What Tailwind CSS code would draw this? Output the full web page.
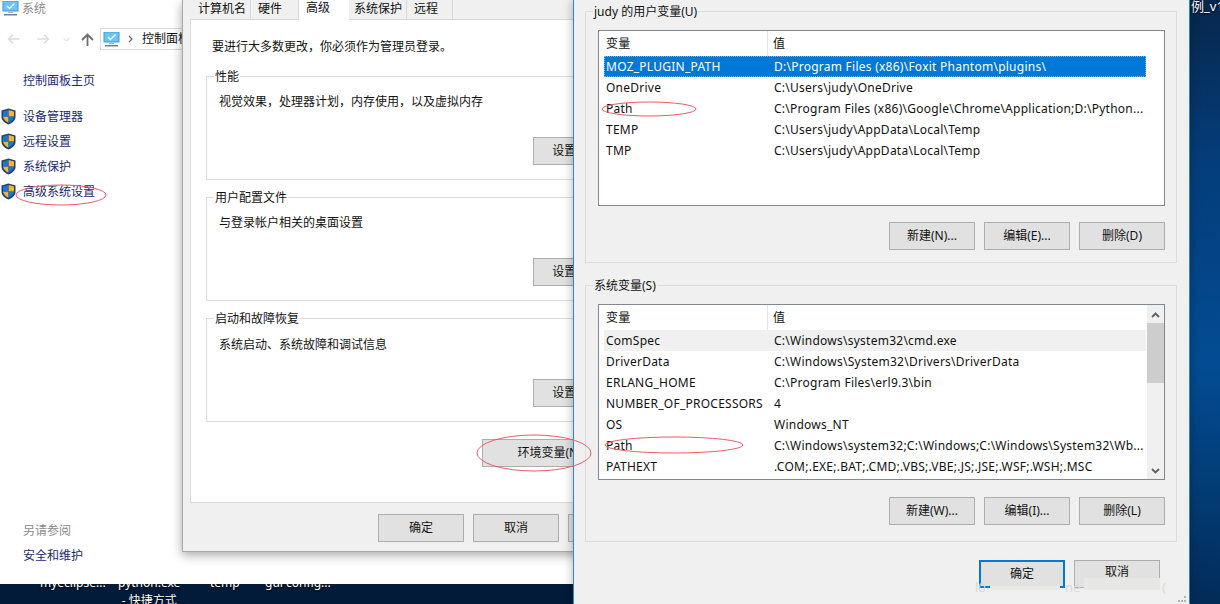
<!DOCTYPE html>
<html lang="zh-CN">
<head>
  <meta charset="UTF-8" />
  <title>系统属性 - 环境变量</title>
  <script src="https://cdn.jsdelivr.net/npm/@tailwindcss/browser@4"></script>
</head>
<body class="bg-[#021b38] font-['Noto_Sans','Noto_Sans_CJK_SC',sans-serif] text-[12px] leading-[18px] text-[#111]">
<div class="relative w-[1220px] h-[604px] overflow-hidden">

  <!-- desktop -->
  <div class="absolute right-0 top-0 w-[31px] h-[604px] bg-[linear-gradient(180deg,#06274c_0%,#043c78_25%,#034c94_60%,#02396f_85%,#022b58_100%)]"></div>
  <div class="absolute left-[1191px] top-[-3px] text-white text-[13px] whitespace-nowrap [text-shadow:0_1px_2px_#000]">例_v1.</div>
  <div class="absolute left-[40px] top-[574px] text-white whitespace-nowrap [text-shadow:0_1px_2px_#000]">myeclipse...</div>
  <div class="absolute left-[118px] top-[574px] text-white whitespace-nowrap text-center [text-shadow:0_1px_2px_#000]">python.exe<br />- 快捷方式</div>
  <div class="absolute left-[210px] top-[574px] text-white whitespace-nowrap [text-shadow:0_1px_2px_#000]">temp</div>
  <div class="absolute left-[265px] top-[574px] text-white whitespace-nowrap [text-shadow:0_1px_2px_#000]">gui config...</div>

  <!-- control panel window -->
  <div class="absolute left-0 top-0 w-[590px] h-[584px] bg-white flex flex-col">
    <div class="flex items-center h-[17px] pl-[2px] gap-[3px] text-[#8a8a8a]">
      <svg width="17" height="15" viewBox="0 0 17 15"><rect x="1" y="0" width="15" height="10" fill="#6cc4f5" stroke="#3e97d8" /><path d="M5 5l2.500 2.500 5-5" fill="none" stroke="#fff" stroke-width="1.500" /><rect x="6" y="11" width="5" height="1" fill="#9db4c8" /><rect x="2" y="13" width="13" height="1.500" fill="#6d8296" /></svg>
      <span>系统</span>
    </div>
    <div class="flex items-center h-[22px] mt-[11px]">
      <svg class="ml-[7px]" width="13" height="12" viewBox="0 0 13 12"><path d="M12.500 6H1.500M6 1.500L1.500 6 6 10.500" fill="none" stroke="#dcdcdc" stroke-width="1.500" /></svg>
      <svg class="ml-[17px]" width="13" height="12" viewBox="0 0 13 12"><path d="M.5 6h11M7 1.500L11.500 6 7 10.500" fill="none" stroke="#dcdcdc" stroke-width="1.500" /></svg>
      <svg class="ml-[13px]" width="7" height="5" viewBox="0 0 7 5"><path d="M.5 1l3 3 3-3" fill="none" stroke="#d4d4d4" /></svg>
      <svg class="ml-[11px]" width="13" height="13" viewBox="0 0 13 13"><path d="M6.500 13V1.500M1 7l5.500-5.500L12 7" fill="none" stroke="#6e6e6e" stroke-width="1.800" /></svg>
      <div class="ml-[6px] w-[200px] h-[22px] border border-[#d9d9d9] flex items-center pl-[2px] whitespace-nowrap overflow-hidden">
        <svg class="shrink-0" width="17" height="15" viewBox="0 0 17 15"><rect x="1" y="0" width="15" height="10" fill="#6cc4f5" stroke="#3e97d8" /><path d="M5 5l2.500 2.500 5-5" fill="none" stroke="#fff" stroke-width="1.500" /><rect x="6" y="11" width="5" height="1" fill="#9db4c8" /><rect x="2" y="13" width="13" height="1.500" fill="#6d8296" /></svg>
        <svg class="ml-[8px] shrink-0" width="5" height="8" viewBox="0 0 5 8"><path d="M1 1l3 3-3 3" fill="none" stroke="#666" stroke-width="1.200" /></svg>
        <span class="ml-[9px]">控制面板</span>
      </div>
    </div>
    <div class="pl-[23px] mt-[22px] text-[#1a2a6c]">控制面板主页</div>
    <ul class="mt-[14px] text-[#1a2a6c]">
      <li class="flex items-center h-[25px] pl-[1px] gap-[7px]">
        <svg width="15" height="17" viewBox="0 0 15 17"><path d="M7.500.5L14.500 2.500V9c0 3.500-3.500 6-7 7.500C4 15 .5 12.500.5 9V2.500z" fill="#24406a" /><path d="M7.500 2L13 3.500V8.500H7.500z" fill="#f5b52e" /><path d="M7.500 8.500H2C2.300 11.500 5 13.500 7.500 14.800z" fill="#f5b52e" /><path d="M7.500 2L2 3.500V8.500H7.500z" fill="#1c78cf" /><path d="M7.500 8.500H13C12.700 11.500 10 13.500 7.500 14.800z" fill="#1c78cf" /></svg>
        <span>设备管理器</span>
      </li>
      <li class="flex items-center h-[25px] pl-[1px] gap-[7px]">
        <svg width="15" height="17" viewBox="0 0 15 17"><path d="M7.500.5L14.500 2.500V9c0 3.500-3.500 6-7 7.500C4 15 .5 12.500.5 9V2.500z" fill="#24406a" /><path d="M7.500 2L13 3.500V8.500H7.500z" fill="#f5b52e" /><path d="M7.500 8.500H2C2.300 11.500 5 13.500 7.500 14.800z" fill="#f5b52e" /><path d="M7.500 2L2 3.500V8.500H7.500z" fill="#1c78cf" /><path d="M7.500 8.500H13C12.700 11.500 10 13.500 7.500 14.800z" fill="#1c78cf" /></svg>
        <span>远程设置</span>
      </li>
      <li class="flex items-center h-[25px] pl-[1px] gap-[7px]">
        <svg width="15" height="17" viewBox="0 0 15 17"><path d="M7.500.5L14.500 2.500V9c0 3.500-3.500 6-7 7.500C4 15 .5 12.500.5 9V2.500z" fill="#24406a" /><path d="M7.500 2L13 3.500V8.500H7.500z" fill="#f5b52e" /><path d="M7.500 8.500H2C2.300 11.500 5 13.500 7.500 14.800z" fill="#f5b52e" /><path d="M7.500 2L2 3.500V8.500H7.500z" fill="#1c78cf" /><path d="M7.500 8.500H13C12.700 11.500 10 13.500 7.500 14.800z" fill="#1c78cf" /></svg>
        <span>系统保护</span>
      </li>
      <li class="flex items-center h-[25px] pl-[1px] gap-[7px]">
        <svg width="15" height="17" viewBox="0 0 15 17"><path d="M7.500.5L14.500 2.500V9c0 3.500-3.500 6-7 7.500C4 15 .5 12.500.5 9V2.500z" fill="#24406a" /><path d="M7.500 2L13 3.500V8.500H7.500z" fill="#f5b52e" /><path d="M7.500 8.500H2C2.300 11.500 5 13.500 7.500 14.800z" fill="#f5b52e" /><path d="M7.500 2L2 3.500V8.500H7.500z" fill="#1c78cf" /><path d="M7.500 8.500H13C12.700 11.500 10 13.500 7.500 14.800z" fill="#1c78cf" /></svg>
        <span>高级系统设置</span>
      </li>
    </ul>
    <div class="mt-auto pl-[23px] text-[#8a8a8a]">另请参阅</div>
    <div class="mt-[7px] mb-[19px] pl-[23px] text-[#1a2a6c]">安全和维护</div>
  </div>

  <!-- system properties dialog -->
  <div class="absolute left-[182px] top-0 w-[400px] h-[552px] bg-[#f0f0f0] border-l border-b border-[#a8a8a8] shadow-[0_3px_10px_rgba(0,0,0,0.35)]">
    <div class="flex h-[19px] pl-[10px] whitespace-nowrap">
      <div class="w-[58px] border-r border-[#d9d9d9] pl-[5px]">计算机名</div>
      <div class="w-[48px] border-r border-[#d9d9d9] pl-[7px]">硬件</div>
      <div class="w-[50px] h-[21px] bg-white pl-[7px] -mt-[1px] relative z-10">高级</div>
      <div class="w-[58px] border-r border-[#d9d9d9] pl-[5px]">系统保护</div>
      <div class="w-[46px] border-r border-[#d9d9d9] pl-[7px]">远程</div>
    </div>
    <div class="ml-[7px] w-[440px] h-[484px] bg-white border border-[#d9d9d9]">
      <p class="pl-[21px] pt-[18px]">要进行大多数更改，你必须作为管理员登录。</p>
      <div class="relative ml-[15px] mt-[20px] w-[410px] h-[104px] border border-[#dcdcdc] pl-[12px] pt-[16px]">
        <span class="absolute left-[7px] -top-[9px] bg-white px-[1px]">性能</span>
        <p>视觉效果，处理器计划，内存使用，以及虚拟内存</p>
        <button class="block ml-[314px] mt-[26px] w-[86px] h-[28px] bg-[#e1e1e1] border border-[#adadad] text-center">设置(S)...</button>
      </div>
      <div class="relative ml-[15px] mt-[17px] w-[410px] h-[104px] border border-[#dcdcdc] pl-[12px] pt-[16px]">
        <span class="absolute left-[7px] -top-[9px] bg-white px-[1px]">用户配置文件</span>
        <p>与登录帐户相关的桌面设置</p>
        <button class="block ml-[314px] mt-[26px] w-[86px] h-[28px] bg-[#e1e1e1] border border-[#adadad] text-center">设置(E)...</button>
      </div>
      <div class="relative ml-[15px] mt-[17px] w-[410px] h-[104px] border border-[#dcdcdc] pl-[12px] pt-[17px]">
        <span class="absolute left-[7px] -top-[9px] bg-white px-[1px]">启动和故障恢复</span>
        <p>系统启动、系统故障和调试信息</p>
        <button class="block ml-[314px] mt-[25px] w-[86px] h-[28px] bg-[#e1e1e1] border border-[#adadad] text-center">设置(T)...</button>
      </div>
      <button class="block ml-[291px] mt-[17px] w-[137px] h-[28px] bg-[#e1e1e1] border border-[#adadad] text-center pl-[8px]">环境变量(N)...</button>
    </div>
    <div class="flex gap-[9px] ml-[195px] mt-[11px]">
      <button class="w-[86px] h-[28px] shrink-0 bg-[#e1e1e1] border border-[#adadad]">确定</button>
      <button class="w-[86px] h-[28px] shrink-0 bg-[#e1e1e1] border border-[#adadad]">取消</button>
      <button class="w-[86px] h-[28px] shrink-0 bg-[#e1e1e1] border border-[#adadad]">应用(A)</button>
    </div>
  </div>

  <!-- environment variables dialog -->
  <div class="absolute left-[573px] top-0 w-[617px] h-[604px] bg-[#f0f0f0] border-x border-[#2f86cf] shadow-[0_0_10px_rgba(0,0,0,0.3)]">
    <div class="relative ml-[11px] mt-[11px] w-[592px] h-[252px] border border-[#dcdcdc]">
      <span class="absolute left-[7px] -top-[9px] bg-[#f0f0f0] px-[1px]">judy 的用户变量(U)</span>
      <div class="absolute left-[12px] top-[18px] w-[567px] h-[176px] bg-white border border-[#828790] pl-[5px] tracking-[0.25px]">
        <div class="flex h-[25px] w-[542px] items-center">
          <div class="w-[164px] h-[25px] pl-[2px] leading-[25px] border-r border-[#e5e5e5]">变量</div>
          <div class="pl-[5px]">值</div>
        </div>
        <div class="flex h-[21px] w-[542px] items-center bg-[#0078d7] text-white outline-1 outline-dotted outline-[#7fb8e8] -outline-offset-1">
          <div class="w-[170px] pl-[2px]">MOZ_PLUGIN_PATH</div>
          <div>D:\Program Files (x86)\Foxit Phantom\plugins\</div>
        </div>
        <div class="flex h-[21px] w-[542px] items-center">
          <div class="w-[170px] pl-[2px]">OneDrive</div>
          <div>C:\Users\judy\OneDrive</div>
        </div>
        <div class="flex h-[21px] w-[542px] items-center">
          <div class="w-[170px] pl-[2px]">Path</div>
          <div class="whitespace-nowrap">C:\Program Files (x86)\Google\Chrome\Application;D:\Python...</div>
        </div>
        <div class="flex h-[21px] w-[542px] items-center">
          <div class="w-[170px] pl-[2px]">TEMP</div>
          <div>C:\Users\judy\AppData\Local\Temp</div>
        </div>
        <div class="flex h-[21px] w-[542px] items-center">
          <div class="w-[170px] pl-[2px]">TMP</div>
          <div>C:\Users\judy\AppData\Local\Temp</div>
        </div>
      </div>
      <div class="absolute left-[303px] top-[210px] flex gap-[9px]">
        <button class="w-[86px] h-[28px] bg-[#e1e1e1] border border-[#adadad]">新建(N)...</button>
        <button class="w-[86px] h-[28px] bg-[#e1e1e1] border border-[#adadad]">编辑(E)...</button>
        <button class="w-[86px] h-[28px] bg-[#e1e1e1] border border-[#adadad]">删除(D)</button>
      </div>
    </div>

    <div class="relative ml-[11px] mt-[22px] w-[592px] h-[257px] border border-[#dcdcdc]">
      <span class="absolute left-[7px] -top-[9px] bg-[#f0f0f0] px-[1px]">系统变量(S)</span>
      <div class="absolute left-[12px] top-[18px] w-[567px] h-[176px] bg-white border border-[#828790] pl-[5px] flex tracking-[0.25px]">
        <div class="w-[542px]">
          <div class="flex h-[25px] items-center">
            <div class="w-[164px] h-[25px] pl-[2px] leading-[25px] border-r border-[#e5e5e5]">变量</div>
            <div class="pl-[5px]">值</div>
          </div>
          <div class="flex h-[21px] items-center bg-[#f0f0f0]">
            <div class="w-[170px] pl-[2px]">ComSpec</div>
            <div>C:\Windows\system32\cmd.exe</div>
          </div>
          <div class="flex h-[21px] items-center">
            <div class="w-[170px] pl-[2px]">DriverData</div>
            <div>C:\Windows\System32\Drivers\DriverData</div>
          </div>
          <div class="flex h-[21px] items-center">
            <div class="w-[170px] pl-[2px]">ERLANG_HOME</div>
            <div>C:\Program Files\erl9.3\bin</div>
          </div>
          <div class="flex h-[21px] items-center">
            <div class="w-[170px] pl-[2px] whitespace-nowrap">NUMBER_OF_PROCESSORS</div>
            <div>4</div>
          </div>
          <div class="flex h-[21px] items-center">
            <div class="w-[170px] pl-[2px]">OS</div>
            <div>Windows_NT</div>
          </div>
          <div class="flex h-[21px] items-center">
            <div class="w-[170px] pl-[2px]">Path</div>
            <div class="whitespace-nowrap">C:\Windows\system32;C:\Windows;C:\Windows\System32\Wb...</div>
          </div>
          <div class="flex h-[21px] items-center">
            <div class="w-[170px] pl-[2px]">PATHEXT</div>
            <div>.COM;.EXE;.BAT;.CMD;.VBS;.VBE;.JS;.JSE;.WSF;.WSH;.MSC</div>
          </div>
        </div>
        <div class="ml-[1px] w-[17px] h-[174px] bg-[#f0f0f0] flex flex-col items-center">
          <svg class="mt-[7px]" width="9" height="6" viewBox="0 0 9 6"><path d="M1 5l3.500-3.500L8 5" fill="none" stroke="#606060" stroke-width="1.800" /></svg>
          <div class="mt-[5px] w-[17px] h-[60px] bg-[#cdcdcd]"></div>
          <svg class="mt-auto mb-[5px]" width="9" height="6" viewBox="0 0 9 6"><path d="M1 1l3.500 3.500L8 1" fill="none" stroke="#606060" stroke-width="1.800" /></svg>
        </div>
      </div>
      <div class="absolute left-[303px] top-[211px] flex gap-[9px]">
        <button class="w-[86px] h-[28px] bg-[#e1e1e1] border border-[#adadad]">新建(W)...</button>
        <button class="w-[86px] h-[28px] bg-[#e1e1e1] border border-[#adadad]">编辑(I)...</button>
        <button class="w-[86px] h-[28px] bg-[#e1e1e1] border border-[#adadad]">删除(L)</button>
      </div>
    </div>

    <div class="flex gap-[9px] ml-[405px] mt-[18px]">
      <button class="w-[86px] h-[28px] bg-[#e1e1e1] border-2 border-[#0078d7]">确定</button>
      <button class="w-[86px] h-[28px] bg-[#e1e1e1] border border-[#adadad] pb-[5px]">取消</button>
    </div>
    <!-- blurred watermark over the buttons -->
    <div class="absolute left-[416px] top-[586px] w-[70px] h-[4px] bg-[#e8e8e4]"></div>
    <div class="absolute left-[510px] top-[578px] w-[76px] h-[12px] bg-[#e7e7e5]"></div>
    <div class="absolute left-[401px] top-[578px] text-[#d9d9d9] text-[13px]">l0</div>
    <div class="absolute left-[491px] top-[578px] text-[#d9d9d9] text-[13px]">ne</div>
    <div class="absolute left-[588px] top-[578px] text-[#d9d9d9] text-[13px]">(</div>
    <svg class="absolute left-[604px] top-[596px]" width="9" height="7" viewBox="0 0 9 7" fill="#b5b5b5"><rect x="6" y="0" width="2" height="2" /><rect x="0" y="4" width="2" height="2" /><rect x="3" y="4" width="2" height="2" /><rect x="6" y="4" width="2" height="2" /></svg>
  </div>

  <!-- red annotations drawn over the screenshot -->
  <svg class="absolute left-0 top-0 pointer-events-none" width="1220" height="604" fill="none" stroke="#ee5a66" stroke-width="1">
    <ellipse cx="61" cy="195" rx="45" ry="10" />
    <ellipse cx="534" cy="453" rx="57" ry="18" />
    <ellipse cx="649" cy="109" rx="47" ry="7" />
    <ellipse cx="674" cy="445" rx="69" ry="8" />
  </svg>
</div>
</body>
</html>
